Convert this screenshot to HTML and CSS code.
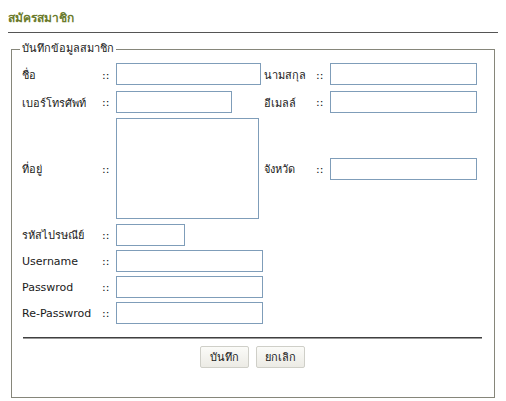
FILE: index.html
```html
<!DOCTYPE html>
<html lang="th">
<head>
<meta charset="utf-8">
<title>สมัครสมาชิก</title>
<link rel="stylesheet" href="styles.css">
</head>
<body>
<h1 class="title">สมัครสมาชิก</h1>
<form class="register">
  <fieldset class="box">
    <legend class="box-legend">บันทึกข้อมูลสมาชิก</legend>
    <div class="grid">
      <label class="lbl r1">ชื่อ</label><span class="sep r1">::</span>
      <input class="field r1 w-name" type="text">
      <label class="lbl2 r1">นามสกุล</label><span class="sep2 r1">::</span>
      <input class="field2 r1" type="text">

      <label class="lbl r2">เบอร์โทรศัพท์</label><span class="sep r2">::</span>
      <input class="field r2 w-phone" type="text">
      <label class="lbl2 r2">อีเมลล์</label><span class="sep2 r2">::</span>
      <input class="field2 r2" type="text">

      <label class="lbl r3">ที่อยู่</label><span class="sep r3">::</span>
      <textarea class="field area r3"></textarea>
      <label class="lbl2 r3">จังหวัด</label><span class="sep2 r3">::</span>
      <input class="field2 r3 mid" type="text">

      <label class="lbl r4">รหัสไปรษณีย์</label><span class="sep r4">::</span>
      <input class="field r4 w-zip" type="text">

      <label class="lbl r5">Username</label><span class="sep r5">::</span>
      <input class="field r5 w-long" type="text">

      <label class="lbl r6">Passwrod</label><span class="sep r6">::</span>
      <input class="field r6 w-long" type="password">

      <label class="lbl r7">Re-Passwrod</label><span class="sep r7">::</span>
      <input class="field r7 w-long" type="password">
    </div>
    <div class="rule"></div>
    <div class="actions">
      <button class="btn" type="submit">บันทึก</button>
      <button class="btn" type="reset">ยกเลิก</button>
    </div>
  </fieldset>
</form>
</body>
</html>
```
FILE: styles.css
```css
html, body {
  background: #ffffff;
}
body {
  margin: 8px;
  font-family: Tahoma, "DejaVu Sans", "Noto Sans", sans-serif;
  font-size: 11px;
  color: #1a1a1a;
}
.title {
  margin: 0;
  height: 24px;
  font-size: 12px;
  font-weight: bold;
  line-height: 20px;
  color: #6b7b2c;
  border-bottom: 1px solid #555555;
}
.register {
  margin: 0;
}
.box {
  margin: 8px 3px 0 3px;
  padding: 6px 12px 29px 8px;
  border: 1px solid #86867a;
  min-width: 0;
}
.box-legend {
  padding: 0 2px;
  font-size: 11px;
  line-height: 16px;
  color: #1a1a1a;
}
.grid {
  margin-left: 2px;
  display: grid;
  grid-template-columns: 80px 14px 148px 52px 14px 147px;
  grid-template-rows: 24px 23px 102px 22px 22px 22px 22px;
  row-gap: 4px;
  align-items: center;
}
.r1 { grid-row: 1; }
.r2 { grid-row: 2; }
.r3 { grid-row: 3; }
.r4 { grid-row: 4; }
.r5 { grid-row: 5; }
.r6 { grid-row: 6; }
.r7 { grid-row: 7; }
.lbl { grid-column: 1; white-space: nowrap; }
.sep { grid-column: 2; color: #111; }
.lbl2 { grid-column: 4; white-space: nowrap; }
.sep2 { grid-column: 5; color: #111; }
.field, .field2 {
  box-sizing: border-box;
  height: 22px;
  margin: 0;
  padding: 2px 3px;
  border: 1px solid #7f9db9;
  background: #ffffff;
  font: inherit;
  align-self: start;
}
.field { grid-column: 3; }
.field2 { grid-column: 6; width: 147px; }
.field2.mid { align-self: center; }
.w-name { width: 145px; }
.w-phone { width: 116px; }
.w-zip { width: 69px; }
.w-long { width: 147px; }
.area {
  width: 143px;
  height: 101px;
  resize: none;
}
.rule {
  margin: 13px 0 0 3px;
  width: 459px;
  height: 0;
  border-top: 1px solid #3f3f3f;
  border-bottom: 1px solid #9a9a9a;
}
.actions {
  padding-top: 7px;
  display: flex;
  justify-content: center;
  gap: 7px;
  margin-left: 3px;
  width: 459px;
}
.btn {
  box-sizing: border-box;
  width: 49px;
  height: 22px;
  padding: 0;
  border: 1px solid #cfcfc8;
  border-radius: 2px;
  background: linear-gradient(#fbfbf8, #ecebe5);
  font: inherit;
  color: #1a1a1a;
}
```
